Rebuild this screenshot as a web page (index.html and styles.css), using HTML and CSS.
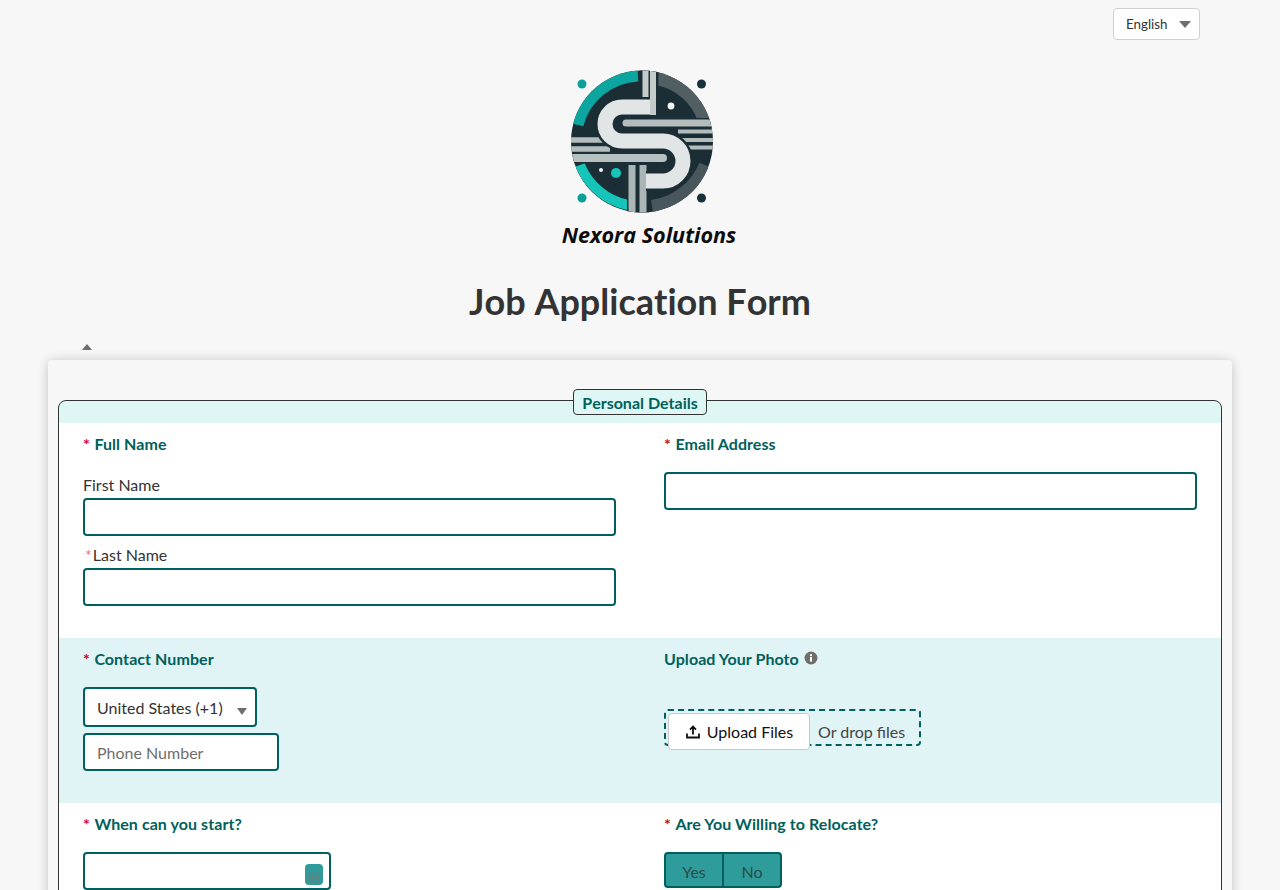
FILE: index.html
```html
<!DOCTYPE html>
<html lang="en">
<head>
  <meta charset="UTF-8">
  <meta name="viewport" content="width=device-width, initial-scale=1.0">
  <title>Job Application Form</title>
  <link rel="stylesheet" href="styles.css">
</head>
<body>

  <div class="lang-bar">
    <div class="lang-select">English <span class="caret caret-lang"></span></div>
  </div>

  <div class="logo">
    <svg class="logo-mark" viewBox="0 0 155 155" width="155" height="155" aria-hidden="true">
      <defs>
        <clipPath id="disc"><circle cx="76" cy="76.5" r="71"/></clipPath>
        <filter id="soft"><feGaussianBlur stdDeviation="0.5"/></filter>
      </defs>
      <g filter="url(#soft)">
        <circle cx="16" cy="19" r="4.5" fill="#11a09a"/>
        <circle cx="135.500" cy="19" r="4.5" fill="#14303a"/>
        <circle cx="16" cy="133" r="4.5" fill="#11a09a"/>
        <circle cx="135.500" cy="133" r="4.5" fill="#14303a"/>
        <g clip-path="url(#disc)">
          <rect x="0" y="0" width="155" height="155" fill="#1e2f36"/>
          <path d="M72 11 A65 65 0 0 0 12 60" fill="none" stroke="#0fa59f" stroke-width="11"/>
          <path d="M14 100 A66 66 0 0 0 62 140" fill="none" stroke="#14c4b9" stroke-width="10"/>
          <path d="M92 12 A63 63 0 0 1 140 54" fill="none" stroke="#515e63" stroke-width="17"/>
          <path d="M139 100 A67 67 0 0 1 86 141" fill="none" stroke="#4a575c" stroke-width="12"/>
          <circle cx="105" cy="41" r="5.5" fill="#1e2f36"/>
          <circle cx="105" cy="41" r="3.4" fill="#f4f6f6"/>
          <circle cx="50" cy="108" r="5" fill="#14c4b9"/>
          <circle cx="35" cy="105" r="2" fill="#eef2f2"/>

          <path d="M83 0 V50" stroke="#1e2f36" stroke-width="19" fill="none"/>
          <path d="M79.500 0 V50 M87 0 V50" stroke="#c3cbcb" stroke-width="6" fill="none"/>
          <path d="M72 100 V155" stroke="#1e2f36" stroke-width="22" fill="none"/>
          <path d="M66 100 V155 M77 100 V155" stroke="#aab5b5" stroke-width="7" fill="none"/>

          <path d="M0 75 H44 M0 84 H44" stroke="#b4bdbd" stroke-width="5.500" fill="none"/>
          <path d="M112 66.500 H155 M112 75 H155 M112 82.500 H155" stroke="#b4bdbd" stroke-width="4" fill="none"/>
          <path d="M0 93 H100" stroke="#1e2f36" stroke-width="11" fill="none"/>
          <path d="M0 93 H97" stroke="#b8c1c1" stroke-width="8" stroke-linecap="round" fill="none"/>

          <path d="M84 42 H56 A17 17 0 0 0 56 76 H97 A20 20 0 0 1 97 116 H80" fill="none" stroke="#1e2f36" stroke-width="20"/>
          <path d="M84 42 H56 A17 17 0 0 0 56 76 H97 A20 20 0 0 1 97 116 H80" fill="none" stroke="#e1e5e5" stroke-width="15"/>
          <path d="M60 58 H155" stroke="#1e2f36" stroke-width="10" fill="none"/>
          <path d="M60 58 H155" stroke="#b4bdbd" stroke-width="7" stroke-linecap="round" fill="none"/>
        </g>
      </g>
    </svg>
    <div class="logo-name">Nexora Solutions</div>
  </div>

  <h1 class="page-title">Job Application Form</h1>

  <div class="collapse-row"><span class="caret-up"></span></div>

  <div class="form-card">
    <form>
      <fieldset class="section">
        <legend class="section-title">Personal Details</legend>

        <div class="form-row row-white row-names">
          <div class="field">
            <div class="field-label"><span class="req">*</span>Full Name</div>
            <label class="sub-label sub-first" for="firstName">First Name</label>
            <input class="text-input" type="text" id="firstName">
            <label class="sub-label sub-last" for="lastName"><span class="req-light">*</span>Last Name</label>
            <input class="text-input" type="text" id="lastName">
          </div>
          <div class="field">
            <div class="field-label"><span class="req">*</span>Email Address</div>
            <input class="text-input email-input" type="text" id="email">
          </div>
        </div>

        <div class="form-row row-tint row-contact">
          <div class="field">
            <div class="field-label"><span class="req">*</span>Contact Number</div>
            <div class="country-select">United States (+1) <span class="caret caret-country"></span></div>
            <input class="text-input phone-input" type="text" placeholder="Phone Number">
          </div>
          <div class="field">
            <div class="field-label">Upload Your Photo
              <svg class="info-icon" viewBox="0 0 14 14" width="14" height="14" aria-hidden="true">
                <circle cx="7" cy="7" r="6.5" fill="#706e6b"/>
                <rect x="6" y="6" width="2" height="4.6" fill="#fff"/>
                <rect x="6" y="3.2" width="2" height="1.9" fill="#fff"/>
              </svg>
            </div>
            <div class="drop-zone">
              <div class="upload-btn">
                <svg viewBox="0 0 16 16" width="16" height="16" aria-hidden="true">
                  <path d="M8 10.5V3M5 5.6 8 2.6l3 3M2 9.5v4h12v-4" fill="none" stroke="#111" stroke-width="1.8"/>
                </svg>
                Upload Files
              </div>
              <span class="drop-text">Or drop files</span>
            </div>
          </div>
        </div>

        <div class="form-row row-white row-start">
          <div class="field">
            <div class="field-label"><span class="req">*</span>When can you start?</div>
            <div class="date-wrap">
              <input class="text-input date-input" type="text">
              <span class="date-btn">
                <svg viewBox="0 0 12 12" width="12" height="12" aria-hidden="true">
                  <path d="M1 2h10v9H1zM1 5h10M1 8h10M4.3 5v6M7.7 5v6" fill="none" stroke="#6a7f7f" stroke-width="1"/>
                </svg>
              </span>
            </div>
          </div>
          <div class="field">
            <div class="field-label"><span class="req">*</span>Are You Willing to Relocate?</div>
            <div class="toggle">
              <span class="toggle-opt">Yes</span>
              <span class="toggle-opt">No</span>
            </div>
          </div>
        </div>
      </fieldset>
    </form>
  </div>

</body>
</html>
```

FILE: styles.css
```css
html, body {
  height: 890px;
  overflow: hidden;
}
body {
  font-family: Lato, sans-serif;
  background-color: #f7f7f7;
  color: #333;
  margin: 0;
}
.lang-bar {
  display: flex;
  justify-content: flex-end;
  padding: 8px 80px 0 0;
}
.lang-select {
  width: 87px;
  height: 32px;
  box-sizing: border-box;
  background-color: #fff;
  border: 1px solid #d0d0d0;
  border-radius: 4px;
  padding-left: 12px;
  font-size: 13.33px;
  line-height: 30px;
  position: relative;
}
.caret {
  position: absolute;
  width: 0;
  height: 0;
  border-left: 6px solid transparent;
  border-right: 6px solid transparent;
  border-top: 7px solid #706e6b;
}
.caret-lang {
  right: 8px;
  top: 12px;
}
.logo {
  display: flex;
  flex-direction: column;
  align-items: center;
  height: 203px;
  padding-top: 25px;
}
.logo-mark {
  display: block;
  margin-left: 7px;
}
.logo-name {
  font-family: "Open Sans", sans-serif;
  font-weight: 700;
  font-style: italic;
  font-size: 21.6px;
  line-height: 26px;
  color: #0c0c0c;
  margin: 2px 0 0 18px;
}
.page-title {
  font-size: 36px;
  font-weight: 700;
  line-height: 44px;
  text-align: center;
  font-kerning: none;
  font-variant-ligatures: none;
  margin: 11px 0 0;
  color: #333;
}
.collapse-row {
  height: 37px;
  padding: 21px 0 0 82px;
  box-sizing: border-box;
}
.caret-up {
  display: block;
  width: 0;
  height: 0;
  border-left: 5px solid transparent;
  border-right: 5px solid transparent;
  border-bottom: 6px solid #706e6b;
}
.form-card {
  margin: 0 48px;
  padding: 27px 10px 40px;
  background-color: #f7f7f7;
  border-radius: 4px;
  box-shadow: 0 1px 12px rgba(0, 0, 0, 0.22);
}
.section {
  margin: 0;
  padding: 10px 0 0;
  border: 1px solid #333;
  border-radius: 8px;
  background-color: #dff7f4;
  min-width: 0;
}
.section-title {
  position: relative;
  top: 2px;
  margin: 0 auto;
  padding: 0 8px;
  height: 26px;
  box-sizing: border-box;
  border: 1px solid #333;
  border-radius: 4px;
  background-color: #dff7f4;
  color: #00605c;
  font-size: 16px;
  font-weight: 700;
  font-kerning: none;
  font-variant-ligatures: none;
  line-height: 26px;
}
.form-row {
  display: grid;
  grid-template-columns: 533px 533px;
  column-gap: 48px;
  padding: 12px 24px 0;
}
.row-white {
  background-color: #fff;
}
.row-tint {
  background-color: #e0f4f6;
}
.row-names {
  height: 215px;
  box-sizing: border-box;
}
.row-contact {
  height: 165px;
  box-sizing: border-box;
}
.row-start {
  height: 150px;
  box-sizing: border-box;
}
.field-label {
  color: #00605c;
  font-size: 16px;
  font-weight: 700;
  letter-spacing: 0.07px;
  font-variant-ligatures: none;
  line-height: 18px;
}
.req {
  color: #d0021b;
  margin-right: 4.5px;
}
.req-light {
  color: #e57373;
  margin: 0 1px 0 2px;
}
.sub-label {
  display: block;
  font-size: 16px;
  line-height: 20px;
  color: #333;
}
.sub-first {
  margin-top: 22px;
  margin-bottom: 3px;
}
.sub-last {
  margin-top: 9px;
  margin-bottom: 3px;
}
.text-input {
  display: block;
  width: 100%;
  height: 38px;
  box-sizing: border-box;
  padding: 0 12px;
  background-color: #fff;
  border: 2px solid #005f5f;
  border-radius: 4px;
  font-family: Lato, sans-serif;
  font-size: 16px;
}
.text-input::placeholder {
  color: #706e6b;
  opacity: 1;
}
.email-input {
  margin-top: 19px;
}
.country-select {
  position: relative;
  width: 174px;
  height: 40px;
  box-sizing: border-box;
  margin-top: 19px;
  padding-left: 12px;
  background-color: #fff;
  border: 2px solid #005f5f;
  border-radius: 4px;
  font-size: 16px;
  line-height: 38px;
}
.caret-country {
  right: 8px;
  top: 19px;
  border-left-width: 5.5px;
  border-right-width: 5.5px;
}
.phone-input {
  width: 196px;
  margin-top: 6px;
}
.info-icon {
  vertical-align: 0;
  margin-left: 1px;
}
.drop-zone {
  display: flex;
  align-items: flex-start;
  gap: 8px;
  width: 257px;
  height: 37px;
  box-sizing: border-box;
  margin-top: 41px;
  padding: 2px;
  border: 2px dashed #005f5f;
  border-radius: 4px;
}
.upload-btn {
  display: flex;
  align-items: center;
  justify-content: center;
  gap: 6px;
  flex: none;
  width: 142px;
  height: 37px;
  box-sizing: border-box;
  background-color: #fff;
  border: 1px solid #c9c9c9;
  border-radius: 4px;
  color: #111;
  font-size: 16px;
}
.drop-text {
  font-size: 16px;
  line-height: 37px;
  color: #444;
}
.date-wrap {
  position: relative;
  width: 248px;
  margin-top: 19px;
}
.date-btn {
  position: absolute;
  left: 222px;
  top: 12px;
  display: flex;
  align-items: flex-end;
  justify-content: center;
  width: 18px;
  height: 21px;
  padding-bottom: 2px;
  box-sizing: border-box;
  background-color: #2d9c9a;
  border-radius: 4px;
}
.toggle {
  display: flex;
  width: 118px;
  height: 36px;
  box-sizing: border-box;
  margin-top: 19px;
  background-color: #2d9c9a;
  border: 2px solid #005f5f;
  border-radius: 4px;
}
.toggle-opt {
  flex: 1;
  text-align: center;
  font-size: 16px;
  line-height: 36px;
  color: #2a4a4a;
}
.toggle-opt + .toggle-opt {
  border-left: 2px solid #005f5f;
}
```
